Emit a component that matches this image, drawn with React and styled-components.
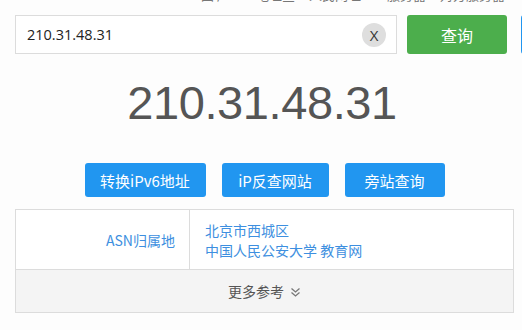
import styled, { createGlobalStyle } from "styled-components";

const Global = createGlobalStyle`
  html, body {
    margin: 0;
    padding: 0;
    background: #fdfdfd;
    overflow: hidden;
  }
  body {
    font-family: "Noto Sans CJK SC", "Open Sans", sans-serif;
  }
`;

const Page = styled.div`
  width: 522px;
  height: 330px;
  overflow: hidden;
`;

const TopNav = styled.div`
  height: 4px;
  overflow: hidden;
  display: flex;
  justify-content: flex-end;
  gap: 14px;
  padding-right: 17px;
  span {
    font-size: 13px;
    line-height: 14px;
    margin-top: -12px;
    color: #777;
  }
`;

const SearchRow = styled.div`
  display: flex;
  align-items: stretch;
  margin: 11px 0 0 15px;
  height: 39px;
  width: 620px;
`;

const InputBox = styled.div`
  width: 382px;
  flex: none;
  box-sizing: border-box;
  border: 1px solid #dcdcdc;
  background: #fff;
  display: flex;
  align-items: center;
  justify-content: space-between;
  padding: 0 10px 0 11px;
  font-family: "Open Sans", "Noto Sans CJK SC", sans-serif;
  font-size: 14.5px;
  color: #222;
`;

const ClearBtn = styled.span`
  width: 24px;
  height: 24px;
  border-radius: 50%;
  background: #dedede;
  color: #333;
  font-size: 15px;
  line-height: 24px;
  text-align: center;
  font-family: "Open Sans", sans-serif;
`;

const Button = styled.button`
  flex: none;
  border: none;
  border-radius: 3px;
  color: #fff;
  background: ${(p) => (p.$green ? "#4cae4c" : "#2196f0")};
  font-family: "Noto Sans CJK SC", sans-serif;
  font-size: ${(p) => (p.$green ? "16px" : "15px")};
  width: ${(p) => p.$w}px;
  height: ${(p) => p.$h || 34}px;
  padding: 0;
  cursor: pointer;
`;

const SearchSide = styled.div`
  display: flex;
  gap: 14px;
  margin-left: 10px;
`;

const BigIp = styled.div`
  text-align: center;
  font-family: "Liberation Sans", Arial, sans-serif;
  font-size: 47px;
  letter-spacing: -0.4px;
  color: #555;
  line-height: 52px;
  margin: 23px 0 0 0;
  padding-left: 2px;
`;

const ActionRow = styled.div`
  display: flex;
  justify-content: center;
  gap: 16px;
  margin-top: 34px;
  padding-left: 7px;
`;

const Table = styled.div`
  margin: 12px 0 0 15px;
  width: 499px;
  box-sizing: border-box;
  border: 1px solid #dcdcdc;
  background: #fff;
`;

const Row = styled.div`
  display: grid;
  grid-template-columns: 174px 1fr;
  height: 59px;
  border-bottom: 1px solid #dcdcdc;
`;

const Label = styled.div`
  border-right: 1px solid #dcdcdc;
  display: flex;
  align-items: center;
  justify-content: flex-end;
  padding-right: 14px;
  color: #3d8fe0;
  font-size: 14px;
`;

const Value = styled.div`
  display: flex;
  flex-direction: column;
  justify-content: center;
  padding-left: 15px;
  font-size: 14px;
  line-height: 20px;
  color: #3d8fe0;
`;

const More = styled.div`
  height: 42px;
  background: #f4f4f4;
  display: flex;
  align-items: center;
  justify-content: center;
  gap: 6px;
  color: #555;
  font-size: 14px;
  svg {
    margin-top: 2px;
  }
`;

export default function App() {
  return (
    <Page>
      <Global />
      <TopNav>
        <span>国 产</span>
        <span>IP地址查</span>
        <span>人民网址</span>
        <span>IP服务器</span>
        <span>对方服务器</span>
      </TopNav>
      <SearchRow>
        <InputBox>
          <span>210.31.48.31</span>
          <ClearBtn>X</ClearBtn>
        </InputBox>
        <SearchSide>
          <Button $green $w={100} $h={39}>查询</Button>
          <Button $w={100} $h={39} />
        </SearchSide>
      </SearchRow>
      <BigIp>210.31.48.31</BigIp>
      <ActionRow>
        <Button $w={121}>转换iPv6地址</Button>
        <Button $w={107}>iP反查网站</Button>
        <Button $w={100}>旁站查询</Button>
      </ActionRow>
      <Table>
        <Row>
          <Label>ASN归属地</Label>
          <Value>
            <span>北京市西城区</span>
            <span>中国人民公安大学 教育网</span>
          </Value>
        </Row>
        <More>
          更多参考
          <svg width="11" height="11" viewBox="0 0 11 11" fill="none" stroke="#777" strokeWidth="1.3">
            <path d="M1.5 1.5 L5.5 5 L9.5 1.5" />
            <path d="M1.5 5.5 L5.5 9 L9.5 5.5" />
          </svg>
        </More>
      </Table>
    </Page>
  );
}
